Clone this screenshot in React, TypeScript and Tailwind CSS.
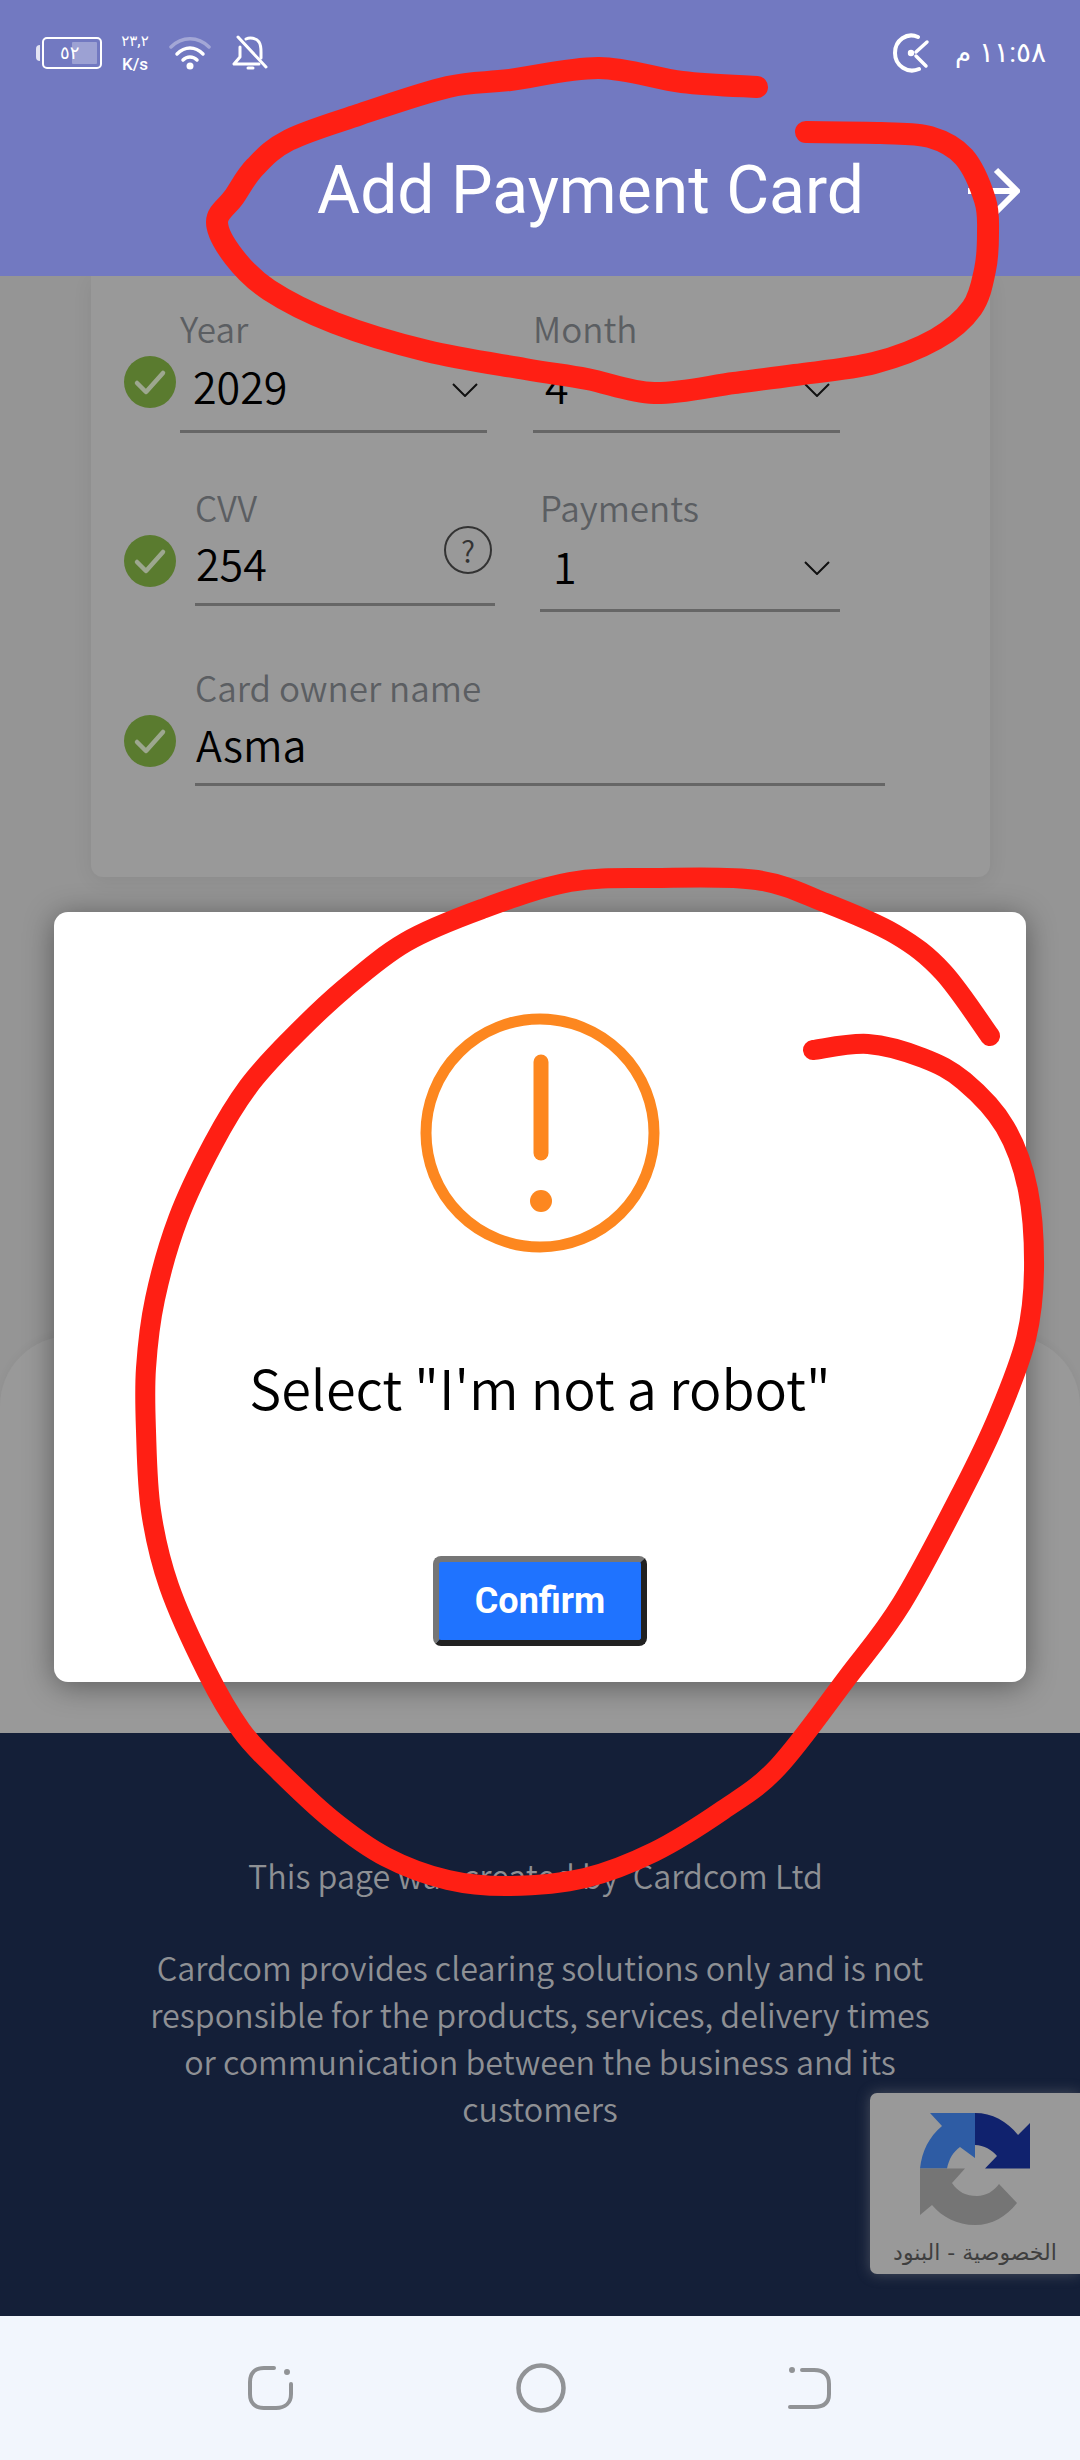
import React from "react";

type P = [number, number];

function smooth(points: P[]): string {
  let d = `M${points[0][0]} ${points[0][1]}`;
  for (let i = 0; i < points.length - 1; i++) {
    const p0 = points[Math.max(i - 1, 0)];
    const p1 = points[i];
    const p2 = points[i + 1];
    const p3 = points[Math.min(i + 2, points.length - 1)];
    const c1x = p1[0] + (p2[0] - p0[0]) / 6;
    const c1y = p1[1] + (p2[1] - p0[1]) / 6;
    const c2x = p2[0] - (p3[0] - p1[0]) / 6;
    const c2y = p2[1] - (p3[1] - p1[1]) / 6;
    d += ` C${c1x.toFixed(1)} ${c1y.toFixed(1)} ${c2x.toFixed(1)} ${c2y.toFixed(1)} ${p2[0]} ${p2[1]}`;
  }
  return d;
}

const strokeA: P[] = [
  [757, 87], [682, 82], [599, 68], [510, 80], [448, 87], [358, 115], [289, 140], [255, 167], [234, 197], [217, 222],
  [234, 257], [269, 290], [335, 323], [427, 351], [525, 369], [587, 379], [654, 393], [734, 383], [795, 375],
  [874, 363], [936, 339], [972, 308], [985, 270], [988, 233], [985, 200], [964, 157], [930, 137], [881, 133], [806, 132],
];

const strokeB: P[] = [
  [990, 1036], [943, 972], [895, 934], [826, 903], [757, 880], [654, 878], [570, 882], [482, 909], [406, 942],
  [344, 989], [289, 1041], [248, 1087], [213, 1144], [178, 1219], [155, 1299], [146, 1368], [146, 1431], [151, 1511],
  [169, 1586], [207, 1672], [241, 1730], [275, 1767], [331, 1819], [386, 1857], [448, 1880], [510, 1886], [585, 1878],
  [654, 1852], [723, 1810], [778, 1767], [847, 1678], [902, 1603], [964, 1488], [999, 1414], [1026, 1339], [1034, 1270],
  [1028, 1190], [1005, 1127], [964, 1081], [923, 1058], [868, 1044], [813, 1050],
];

function Check({ className }: { className: string }) {
  return (
    <svg viewBox="0 0 52 52" className={`w-[52px] h-[52px] shrink-0 ${className}`}>
      <circle cx="26" cy="26" r="26" fill="#5a7b2f" />
      <path d="M13 27 L22 36 L39 17" fill="none" stroke="#9da78f" strokeWidth="4.5" strokeLinecap="round" strokeLinejoin="round" />
    </svg>
  );
}

function Chevron({ className }: { className: string }) {
  return (
    <svg viewBox="0 0 26 14" className={`w-[26px] h-[14px] ${className}`}>
      <path d="M1 1 L13 13 L25 1" fill="none" stroke="#111" strokeWidth="2" />
    </svg>
  );
}

function Label({ children }: { children: React.ReactNode }) {
  return <div className="h-[50px] leading-[50px] text-[35px] text-[#5b5e62] font-[350]">{children}</div>;
}

function Value({ children }: { children: React.ReactNode }) {
  return <span className="text-[43px] text-black font-[350] leading-none">{children}</span>;
}

export default function App() {
  return (
    <div className="relative w-[1080px] h-[2460px] overflow-hidden flex flex-col bg-[#959595] font-['Noto_Sans_CJK_SC','Noto_Sans',sans-serif]">
      {/* Header */}
      <header className="h-[276px] shrink-0 bg-[#7279c1] relative z-10 flex flex-col text-white">
        <div className="h-[110px] pt-[33px] pl-[36px] pr-[34px] flex justify-between items-start font-['Roboto','DejaVu_Sans',sans-serif]">
          <div className="flex items-center h-[40px]">
            <div className="flex items-center">
              <div className="w-[4px] h-[16px] bg-white/80 rounded-l-sm mr-[2px]" />
              <div className="relative w-[60px] h-[32px] border-[2px] border-white rounded-[5px] flex items-center">
                <div className="absolute right-[3px] top-[3px] bottom-[3px] w-[25px] bg-white/30 rounded-[1px]" />
                <span className="relative ml-[16px] text-[18px] leading-none" dir="rtl">٥٢</span>
              </div>
            </div>
            <div className="w-[50px] ml-[8px] flex flex-col items-center font-medium">
              <span className="text-[15px] leading-[18px]">٢٣,٢</span>
              <span className="text-[17px] leading-[20px] mt-[4px]">K/s</span>
            </div>
            <svg viewBox="0 0 42 34" className="w-[42px] h-[34px] ml-[9px]" fill="none" strokeLinecap="round">
              <path d="M2 11 C13 0 29 0 40 11" stroke="#ffffff" strokeOpacity="0.35" strokeWidth="3.5" />
              <path d="M8 18 C16 10 26 10 34 18" stroke="#fff" strokeWidth="3.5" />
              <path d="M14 24 C18 20 24 20 28 24" stroke="#fff" strokeWidth="3.5" />
              <circle cx="21" cy="30" r="3.5" fill="#fff" />
            </svg>
            <svg viewBox="0 0 36 36" className="w-[36px] h-[36px] ml-[21px]" fill="none" stroke="#fff" strokeWidth="3" strokeLinecap="round" strokeLinejoin="round">
              <path d="M6 2 L34 32" />
              <path d="M14 4 C18 2 24 3 27 7 C29 10 29 13 29 17 L29 23 M8 12 L8 22 L2 29 L27 29" />
              <path d="M16 33 L21 33" />
            </svg>
          </div>
          <div className="flex items-center h-[40px]">
            <svg viewBox="0 0 38 40" className="w-[38px] h-[40px]" fill="none" stroke="#fff" strokeWidth="4" strokeLinecap="round">
              <path d="M25 4 C14 -1 2 7 2 20 C2 33 15 41 26 36" />
              <path d="M34 9 L23 19 M23 23 L33 33" strokeWidth="3.5" />
              <circle cx="18" cy="20" r="1.2" fill="#fff" />
            </svg>
            <span className="ml-[24px] text-[26px] leading-none">م</span>
            <span className="ml-[8px] text-[28px] leading-none">١١:٥٨</span>
          </div>
        </div>
        <div className="flex justify-end items-center h-[62px] mt-[50px] pr-[60px]">
          <h1 className="text-[66px] font-normal leading-none font-['Roboto',sans-serif] whitespace-nowrap">Add Payment Card</h1>
          <svg viewBox="0 0 52 48" className="w-[52px] h-[48px] ml-[104px]" fill="none" stroke="#fff" strokeWidth="6">
            <path d="M0 24 L48 24 M28 3 L49 24 L28 45" />
          </svg>
        </div>
      </header>

      {/* Main */}
      <main className="flex-1 flex flex-col min-h-0">
        <section className="ml-[91px] mr-[90px] h-[601px] shrink-0 bg-[#999999] rounded-b-[12px] shadow-[0_4px_20px_rgba(0,0,0,0.07)] pl-[33px] pt-[27px]">
          <div className="flex h-[162px]">
            <Check className="mt-[53px]" />
            <div className="ml-[4px] w-[307px]">
              <Label>Year</Label>
              <div className="h-[65px] flex items-center justify-between pl-[13px] pr-[9px]">
                <Value>2029</Value>
                <Chevron className="mt-[8px]" />
              </div>
              <div className="h-[15px] border-b-[3px] border-[#666]" />
            </div>
            <div className="ml-[46px] w-[307px]">
              <Label>Month</Label>
              <div className="h-[65px] flex items-center justify-between pl-[12px] pr-[10px]">
                <Value>4</Value>
                <Chevron className="mt-[8px]" />
              </div>
              <div className="h-[15px] border-b-[3px] border-[#666]" />
            </div>
          </div>
          <div className="flex h-[180px] mt-[17px]">
            <Check className="mt-[53px]" />
            <div className="ml-[19px] w-[300px]">
              <Label>CVV</Label>
              <div className="h-[60px] flex items-center justify-between pl-[1px] pr-[3px]">
                <Value>254</Value>
                <div className="w-[48px] h-[48px] rounded-full border-2 border-[#333] flex items-center justify-center text-[30px] leading-none text-[#333] mt-[-24px] font-[350]">?</div>
              </div>
              <div className="h-[14px] border-b-[3px] border-[#666]" />
            </div>
            <div className="ml-[45px] w-[300px]">
              <Label>Payments</Label>
              <div className="h-[66px] flex items-center justify-between pl-[13px] pr-[10px]">
                <Value>1</Value>
                <Chevron className="mt-[6px]" />
              </div>
              <div className="h-[14px] border-b-[3px] border-[#666]" />
            </div>
          </div>
          <div className="flex">
            <Check className="mt-[53px]" />
            <div className="ml-[19px] w-[690px]">
              <Label>Card owner name</Label>
              <div className="h-[62px] flex items-center pl-[1px]">
                <Value>Asma</Value>
              </div>
              <div className="h-[12px] border-b-[3px] border-[#666]" />
            </div>
          </div>
        </section>
        <section className="flex-1 mt-[459px] rounded-t-[70px] bg-[#999999] shadow-[0_-2px_8px_rgba(0,0,0,0.04)]" />
      </main>

      {/* Footer */}
      <footer className="h-[583px] shrink-0 bg-[#141f38] flex flex-col items-center pt-[119px] text-[#8e9094] text-center font-[350]">
        <p className="mr-[9px] text-[32.3px] leading-[47px] whitespace-nowrap">This page was created by&nbsp; Cardcom Ltd</p>
        <p className="w-[800px] mt-[45px] text-[32.3px] leading-[47px]">
          Cardcom provides clearing solutions only and is not responsible for the products, services, delivery times or communication between the business and its customers
        </p>
      </footer>

      {/* Nav bar */}
      <nav className="h-[144px] shrink-0 bg-[#f2f6fd] flex items-center justify-center">
        <svg viewBox="0 0 46 44" className="w-[46px] h-[44px] mr-[222px]" fill="none" stroke="#919396" strokeWidth="4" strokeLinecap="round">
          <path d="M26 2 L16 2 C7 2 2 7 2 16 L2 28 C2 37 7 42 16 42 L28 42 C37 42 43 37 43 28 L43 18" />
          <circle cx="39" cy="6" r="2" fill="#919396" stroke="#919396" strokeWidth="2" />
        </svg>
        <svg viewBox="0 0 50 50" className="w-[50px] h-[50px]" fill="none" stroke="#919396" strokeWidth="4.5">
          <circle cx="25" cy="25" r="22.5" />
        </svg>
        <svg viewBox="0 0 44 44" className="w-[44px] h-[44px] ml-[222px]" fill="none" stroke="#919396" strokeWidth="4" strokeLinecap="round">
          <path d="M14 4 L26 4 C36 4 41 9 41 18 L41 28 C41 37 36 41 26 41 L2 41" />
          <circle cx="4" cy="4" r="2" fill="#919396" stroke="#919396" strokeWidth="2" />
        </svg>
      </nav>

      {/* Modal */}
      <div className="absolute z-20 left-[54px] top-[912px] w-[972px] h-[770px] bg-white rounded-[14px] shadow-[0_4px_30px_rgba(0,0,0,0.4)] flex flex-col items-center pt-[101px]">
        <svg viewBox="0 0 240 240" className="w-[240px] h-[240px] shrink-0">
          <circle cx="120" cy="120" r="114" fill="none" stroke="#fd871f" strokeWidth="11" />
          <path d="M121 49 L121 140" stroke="#fd871f" strokeWidth="15" strokeLinecap="round" fill="none" />
          <circle cx="121" cy="188" r="11" fill="#fd871f" />
        </svg>
        <p className="mt-[98px] text-[54px] leading-[72px] font-[350] text-black whitespace-nowrap">Select "I'm not a robot"</p>
        <button className="mt-[133px] w-[214px] h-[90px] rounded-[8px] bg-[#1f73ff] border-[6px] border-t-[#767676] border-l-[#767676] border-r-[#212121] border-b-[#212121] text-white text-[36px] font-bold font-['Roboto',sans-serif] leading-none">
          Confirm
        </button>
      </div>

      {/* reCAPTCHA badge */}
      <div className="absolute z-20 right-0 top-[2093px] w-[210px] h-[181px] bg-[#999999] rounded-l-[7px] shadow-[0_0_14px_rgba(150,150,150,0.4)] flex flex-col items-center pt-[20px]">
        <svg viewBox="0 0 110 112" className="w-[110px] h-[112px] blur-[0.4px]">
          <path d="M10 0 L55 0 L55 45 L40 34 C33 39 29 46 27 55.6 L0 55.6 C2 38 9 24 22 13 Z" fill="#2e5ca4" />
          <path d="M55 0 C72 0 87 8 98 22 L110 10 L110 55.6 L65 55.6 L77 43 C72 37 64 32 55 32 Z" fill="#10226e" />
          <path d="M0 55.6 L45 55.6 L32 70 C38 79 46 83 57 83 C66 83 74 78 79 71 L97 90 C86 104 72 112 55 112 C37 112 22 104 12 92 L0 102 Z" fill="#757575" />
        </svg>
        <span dir="rtl" className="mt-[14px] text-[22px] leading-[28px] text-[#3f3f3f] font-['DejaVu_Sans',sans-serif] whitespace-nowrap">الخصوصية - البنود</span>
      </div>

      {/* Red annotation */}
      <svg viewBox="0 0 1080 2460" className="absolute z-30 left-0 top-0 w-[1080px] h-[2460px] pointer-events-none" fill="none" stroke="#ff1f14" strokeLinecap="round" strokeLinejoin="round">
        <path d={smooth(strokeA)} strokeWidth="22" />
        <path d={smooth(strokeB)} strokeWidth="20" />
      </svg>
    </div>
  );
}
